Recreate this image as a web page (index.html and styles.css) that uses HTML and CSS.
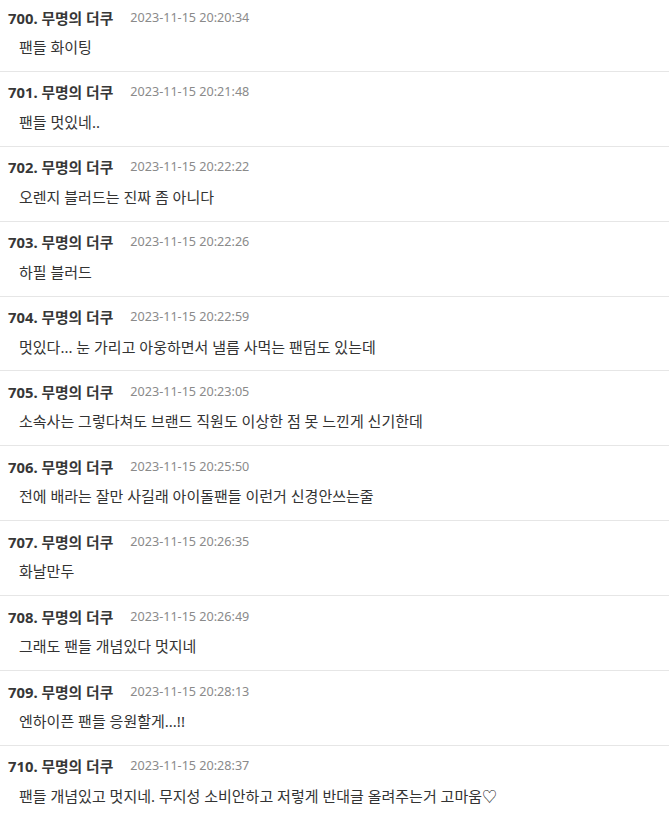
FILE: index.html
```html
<!DOCTYPE html>
<html lang="ko">
<head>
<meta charset="utf-8">
<link rel="stylesheet" href="styles.css">
</head>
<body>
<ul class="comments">
  <li class="comment"><div class="meta"><span class="name">700. 무명의 더쿠</span><span class="date">2023-11-15 20:20:34</span></div><p class="text">팬들 화이팅</p></li>
  <li class="comment"><div class="meta"><span class="name">701. 무명의 더쿠</span><span class="date">2023-11-15 20:21:48</span></div><p class="text">팬들 멋있네..</p></li>
  <li class="comment"><div class="meta"><span class="name">702. 무명의 더쿠</span><span class="date">2023-11-15 20:22:22</span></div><p class="text">오렌지 블러드는 진짜 좀 아니다</p></li>
  <li class="comment"><div class="meta"><span class="name">703. 무명의 더쿠</span><span class="date">2023-11-15 20:22:26</span></div><p class="text">하필 블러드</p></li>
  <li class="comment"><div class="meta"><span class="name">704. 무명의 더쿠</span><span class="date">2023-11-15 20:22:59</span></div><p class="text">멋있다... 눈 가리고 아웅하면서 낼름 사먹는 팬덤도 있는데</p></li>
  <li class="comment"><div class="meta"><span class="name">705. 무명의 더쿠</span><span class="date">2023-11-15 20:23:05</span></div><p class="text">소속사는 그렇다쳐도 브랜드 직원도 이상한 점 못 느낀게 신기한데</p></li>
  <li class="comment"><div class="meta"><span class="name">706. 무명의 더쿠</span><span class="date">2023-11-15 20:25:50</span></div><p class="text">전에 배라는 잘만 사길래 아이돌팬들 이런거 신경안쓰는줄</p></li>
  <li class="comment"><div class="meta"><span class="name">707. 무명의 더쿠</span><span class="date">2023-11-15 20:26:35</span></div><p class="text">화날만두</p></li>
  <li class="comment"><div class="meta"><span class="name">708. 무명의 더쿠</span><span class="date">2023-11-15 20:26:49</span></div><p class="text">그래도 팬들 개념있다 멋지네</p></li>
  <li class="comment"><div class="meta"><span class="name">709. 무명의 더쿠</span><span class="date">2023-11-15 20:28:13</span></div><p class="text">엔하이픈 팬들 응원할게...!!</p></li>
  <li class="comment"><div class="meta"><span class="name">710. 무명의 더쿠</span><span class="date">2023-11-15 20:28:37</span></div><p class="text">팬들 개념있고 멋지네. 무지성 소비안하고 저렇게 반대글 올려주는거 고마움♡</p></li>
</ul>
</body>
</html>
```
FILE: styles.css
```css
html, body {
  margin: 0;
  padding: 0;
  background: #fff;
}
body {
  font-family: "Noto Sans", "Noto Sans CJK KR", sans-serif;
  color: #333;
  overflow: hidden;
}
.comments {
  list-style: none;
  margin: -3px 0 0;
  padding: 0;
}
.comment {
  padding: 10px 8px 13.9px;
  border-bottom: 1px solid #e6e6e6;
}
.meta {
  display: flex;
  align-items: center;
  height: 20px;
  gap: 17px;
}
.name {
  font-size: 14.8px;
  font-weight: 700;
  color: #373737;
}
.date {
  font-size: 12.6px;
  color: #8a8a8a;
}
.text {
  margin: 10px 0 0;
  padding-left: 11px;
  height: 20px;
  line-height: 20px;
  font-size: 15px;
  color: #333;
}
```
